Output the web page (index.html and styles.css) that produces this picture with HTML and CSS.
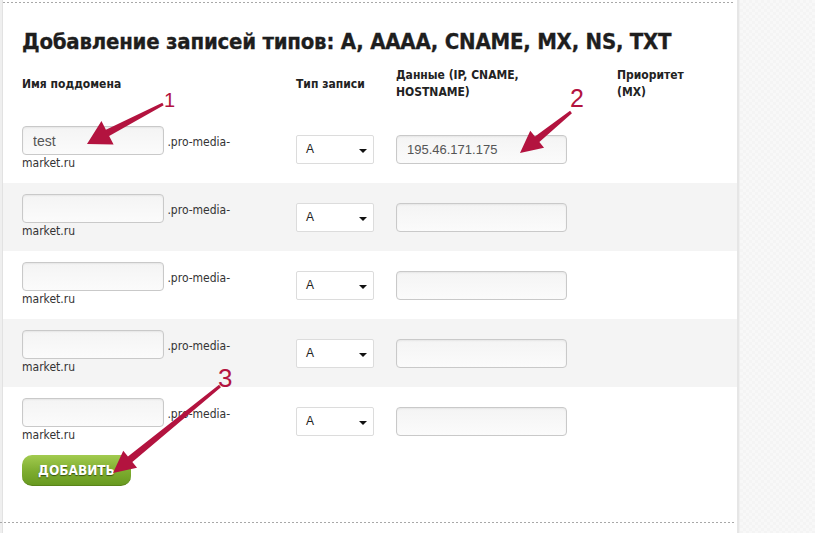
FILE: index.html
```html
<!DOCTYPE html>
<html lang="ru">
<head>
<meta charset="utf-8">
<title>DNS записи</title>
<link rel="stylesheet" href="styles.css">
</head>
<body>
<div class="page">
  <div class="left-strip"></div>
  <main class="panel">
    <div class="dots"></div>
    <h1 class="title">Добавление записей типов: A, AAAA, CNAME, MX, NS, TXT</h1>
    <div class="records">
      <div class="row head">
        <div class="cell c1">Имя поддомена</div>
        <div class="cell c2">Тип записи</div>
        <div class="cell c3">Данные (IP, CNAME, HOSTNAME)</div>
        <div class="cell c4">Приоритет (MX)</div>
      </div>
      <div class="row">
        <div class="cell c1"><input class="field sub" type="text" value="test"> .pro-media-market.ru</div>
        <div class="cell c2"><span class="select"><span class="select-val">A</span></span></div>
        <div class="cell c3"><input class="field data" type="text" value="195.46.171.175"></div>
        <div class="cell c4"></div>
      </div>
      <div class="row alt">
        <div class="cell c1"><input class="field sub" type="text" value=""> .pro-media-market.ru</div>
        <div class="cell c2"><span class="select"><span class="select-val">A</span></span></div>
        <div class="cell c3"><input class="field data" type="text" value=""></div>
        <div class="cell c4"></div>
      </div>
      <div class="row">
        <div class="cell c1"><input class="field sub" type="text" value=""> .pro-media-market.ru</div>
        <div class="cell c2"><span class="select"><span class="select-val">A</span></span></div>
        <div class="cell c3"><input class="field data" type="text" value=""></div>
        <div class="cell c4"></div>
      </div>
      <div class="row alt">
        <div class="cell c1"><input class="field sub" type="text" value=""> .pro-media-market.ru</div>
        <div class="cell c2"><span class="select"><span class="select-val">A</span></span></div>
        <div class="cell c3"><input class="field data" type="text" value=""></div>
        <div class="cell c4"></div>
      </div>
      <div class="row">
        <div class="cell c1"><input class="field sub" type="text" value=""> .pro-media-market.ru</div>
        <div class="cell c2"><span class="select"><span class="select-val">A</span></span></div>
        <div class="cell c3"><input class="field data" type="text" value=""></div>
        <div class="cell c4"></div>
      </div>
    </div>
    <div class="actions"><button class="btn" type="button">Добавить</button></div>
    <div class="dots bottom"></div>
  </main>
  <aside class="side"></aside>

  <svg class="arrows" width="815" height="533" viewBox="0 0 815 533">
    <g fill="#b3133f">
      <polygon points="163.69,105.33 109.15,135.96 113.61,144.61 87,144 101.45,121.09 105.91,129.74 162.31,102.67"/>
      <polygon points="571.94,113.17 539.35,141.94 544.06,147.79 520,153 530.26,130.63 534.97,136.48 570.06,110.83"/>
      <polygon points="220.94,387.17 132.34,461.95 137.04,467.79 113,473 123.26,450.65 127.96,456.49 219.06,384.83"/>
      <text class="num" x="164" y="107" font-size="20">1</text>
      <text class="num" x="570" y="107" font-size="25">2</text>
      <text class="num" x="218" y="387" font-size="26">3</text>
    </g>
  </svg>
</div>
</body>
</html>
```

FILE: styles.css
```css
* { box-sizing: border-box; }

body {
  margin: 0;
  font-family: "DejaVu Sans Condensed", "DejaVu Sans", sans-serif;
  font-size: 12px;
  color: #333;
  background: #fff;
}

.page {
  position: relative;
  display: flex;
  width: 815px;
  height: 533px;
  overflow: hidden;
}

.left-strip {
  flex: none;
  width: 3px;
  background: #efefef;
  border-right: 1px solid #e2e2e2;
}

.panel {
  flex: none;
  width: 736px;
  background: #fff;
  border-right: 2px solid #e6e6e6;
  padding-top: 2px;
}

.side {
  flex: 1;
  background-color: #f8f8f8;
  background-image:
    linear-gradient(45deg, #f4f4f4 25%, transparent 25%, transparent 75%, #f4f4f4 75%),
    linear-gradient(45deg, #f4f4f4 25%, transparent 25%, transparent 75%, #f4f4f4 75%);
  background-size: 6px 6px;
  background-position: 0 0, 3px 3px;
  border-left: 1px solid #f0f0f0;
}

.dots {
  height: 1px;
  margin-right: 2px;
  background-image: repeating-linear-gradient(90deg, #a8a8a8 0 2px, transparent 2px 4px);
}

.dots.bottom {
  margin-top: 35px;
  margin-left: -3px;
}

.title {
  margin: 24px 0 0 19px;
  font-family: "DejaVu Sans Condensed", "DejaVu Sans", sans-serif;
  font-weight: bold;
  font-size: 22px;
  line-height: 30px;
  color: #1e1e1e;
  letter-spacing: -0.24px;
  -webkit-text-stroke: 0.3px #1e1e1e;
}

.records {
  margin-top: 10px;
}

.row {
  display: grid;
  grid-template-columns: 274px 100px 221px 1fr;
  align-items: center;
  padding: 11px 0 11px 19px;
}

.row.alt {
  background: #f4f4f4;
}

.row.head {
  padding: 0 0 14px 19px;
  font-weight: bold;
  color: #222;
  line-height: 17px;
}

.head .c3 { padding-right: 40px; }
.head .c4 { padding-right: 40px; }

.cell.c1 {
  padding-right: 20px;
  line-height: 17px;
}

.field {
  font-family: "Liberation Sans", Arial, sans-serif;
  font-size: 13px;
  color: #555;
  height: 29px;
  border: 1px solid #c9c9c9;
  border-radius: 4px;
  background: linear-gradient(#f4f4f4, #fbfbfb);
  box-shadow: inset 0 1px 2px rgba(0,0,0,0.06);
  padding: 0 10px;
  outline: none;
  margin: 0;
}

.field.sub {
  width: 142px;
  font-size: 14px;
}

.field.data {
  width: 171px;
  height: 29px;
}

.select {
  position: relative;
  display: flex;
  align-items: center;
  width: 78px;
  height: 29px;
  border: 1px solid #dcdcdc;
  border-radius: 2px;
  background: #fff;
  padding-left: 9px;
  font-family: "Liberation Sans", Arial, sans-serif;
  font-size: 12px;
  color: #222;
}

.select::after {
  content: "";
  position: absolute;
  right: 6px;
  top: 13px;
  border-left: 4px solid transparent;
  border-right: 4px solid transparent;
  border-top: 4px solid #111;
}

.actions {
  padding: 0 0 0 19px;
}

.btn {
  display: block;
  width: 109px;
  height: 31px;
  border: none;
  border-radius: 10px;
  border-bottom: 1px solid #5a8419;
  background: linear-gradient(#a2cb4f, #7dac2f 55%, #689a20);
  color: #fff;
  font-family: "DejaVu Sans Condensed", "DejaVu Sans", sans-serif;
  font-weight: bold;
  font-size: 13.5px;
  text-transform: uppercase;
  text-shadow: 0 1px 1px rgba(40,60,10,0.8);
  padding: 0;
}

.dots.bottom {
  margin-top: 36px;
}

.arrows {
  position: absolute;
  left: 0;
  top: 0;
  pointer-events: none;
}

.num {
  font-family: "Liberation Sans", Arial, sans-serif;
  font-weight: normal;
}
```
